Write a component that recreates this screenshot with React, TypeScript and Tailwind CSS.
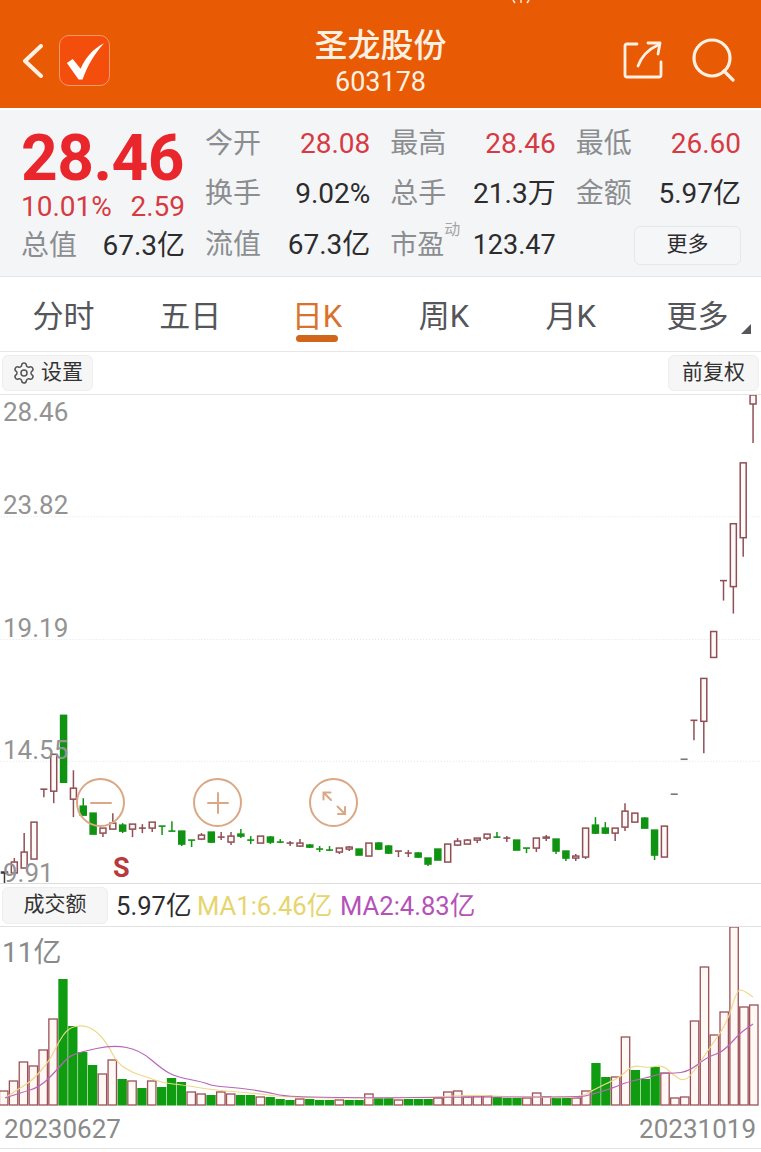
import { Settings } from 'lucide-react';

type Candle = [string, number, number, number, number];

// kind, high, body top, body bottom, low (page y)
const candles: Candle[] = [
  ['t', 872, 872, 873, 883], ['u', 858, 862, 873, 875], ['u', 833, 852, 868, 868], ['u', 822, 822, 859, 859],
  ['u', 789, 789, 789, 797], ['u', 754, 754, 791, 803], ['d', 715, 715, 782, 782], ['u', 770, 788, 799, 817],
  ['d', 798, 806, 815, 815], ['d', 813, 813, 834, 834], ['u', 828, 828, 833, 837], ['u', 813, 823, 829, 829],
  ['d', 823, 825, 831, 833], ['u', 824, 824, 829, 837], ['u', 824, 828, 828, 833], ['u', 822, 822, 828, 832],
  ['d', 826, 826, 826, 835], ['d', 821, 831, 831, 831], ['d', 831, 831, 844, 846], ['d', 840, 840, 840, 847],
  ['u', 833, 835, 839, 840], ['d', 832, 832, 842, 843], ['u', 832, 837, 837, 840], ['u', 832, 836, 842, 845],
  ['d', 829, 834, 836, 838], ['d', 836, 840, 840, 844], ['u', 836, 836, 843, 843], ['d', 836, 837, 842, 844],
  ['d', 839, 842, 842, 843], ['u', 841, 843, 843, 846], ['u', 839, 843, 846, 847], ['d', 844, 845, 847, 848],
  ['d', 846, 849, 849, 852], ['d', 846, 850, 850, 851], ['u', 848, 848, 852, 854], ['u', 846, 847, 849, 851],
  ['d', 849, 849, 855, 855], ['u', 843, 843, 856, 856], ['d', 842, 843, 849, 850], ['d', 845, 846, 853, 854],
  ['u', 851, 851, 851, 857], ['u', 850, 853, 853, 857], ['d', 852, 853, 857, 858], ['d', 858, 858, 864, 866],
  ['d', 849, 849, 860, 860], ['u', 844, 844, 862, 862], ['u', 838, 841, 845, 846], ['u', 839, 840, 844, 844],
  ['u', 838, 838, 840, 843], ['u', 834, 834, 838, 840], ['d', 832, 837, 837, 838], ['u', 836, 838, 838, 842],
  ['d', 840, 840, 850, 850], ['d', 848, 848, 848, 853], ['u', 838, 838, 848, 852], ['u', 835, 837, 838, 841],
  ['d', 839, 839, 851, 854], ['d', 851, 851, 858, 861], ['u', 854, 856, 858, 861], ['u', 828, 828, 857, 859],
  ['d', 817, 825, 833, 834], ['d', 822, 828, 833, 834], ['u', 828, 828, 833, 841], ['u', 803, 811, 827, 831],
  ['u', 813, 813, 822, 822], ['d', 817, 818, 828, 828], ['d', 830, 830, 855, 860], ['u', 826, 826, 857, 857],
  ['n', 794, 794, 794, 794], ['n', 759, 759, 759, 759], ['u', 720, 720, 720, 740], ['u', 678, 678, 721, 753],
  ['u', 631, 631, 657, 657], ['u', 580, 580, 580, 600], ['u', 523, 523, 586, 613], ['u', 462, 462, 537, 556],
  ['u', 394, 394, 403, 442],
];

// page y of each volume bar's top, green when true
const volumes: [number, boolean][] = [
  [1091, false], [1081, false], [1062, false], [1066, false], [1050, false], [1019, false], [979, true], [1026, true],
  [1052, true], [1065, true], [1074, false], [1060, false], [1079, true], [1081, false], [1088, true], [1081, false],
  [1087, true], [1078, true], [1082, true], [1092, false], [1094, false], [1095, true], [1092, false], [1094, false],
  [1095, true], [1095, true], [1097, false], [1097, true], [1099, true], [1100, true], [1099, false], [1099, true],
  [1100, true], [1100, true], [1100, false], [1100, true], [1100, true], [1094, false], [1098, true], [1098, true],
  [1100, false], [1099, true], [1099, true], [1099, true], [1098, false], [1092, false], [1091, false], [1097, false],
  [1096, false], [1096, false], [1097, true], [1098, true], [1098, true], [1098, false], [1093, false], [1097, false],
  [1097, true], [1098, true], [1098, false], [1091, false], [1063, true], [1077, true], [1077, false], [1037, false],
  [1070, true], [1079, true], [1067, true], [1073, false], [1098, false], [1097, false], [1021, false], [967, false],
  [1035, false], [1012, false], [927, false], [1007, false], [1005, false],
];

const ma1: [number, number][] = [
  [5, 1098], [20, 1088], [33, 1080], [50, 1060], [58, 1043], [68, 1028], [83, 1025], [95, 1030], [107, 1043],
  [117, 1063], [133, 1073], [147, 1077], [163, 1083], [183, 1085], [213, 1090], [253, 1093], [283, 1097], [333, 1098],
  [380, 1098], [433, 1097], [473, 1095], [493, 1096], [523, 1097], [580, 1098], [593, 1090], [610, 1082], [620, 1077],
  [633, 1065], [647, 1068], [663, 1065], [673, 1075], [685, 1082], [697, 1067], [713, 1043], [727, 1023], [737, 990],
  [743, 990], [753, 997],
];
const ma2: [number, number][] = [
  [5, 1098], [20, 1093], [40, 1087], [57, 1070], [68, 1057], [80, 1052], [113, 1045], [140, 1050], [163, 1070],
  [177, 1077], [203, 1082], [213, 1086], [240, 1088], [267, 1092], [283, 1096], [313, 1097], [380, 1098], [447, 1097],
  [580, 1097], [590, 1095], [613, 1088], [627, 1082], [650, 1077], [663, 1073], [687, 1073], [707, 1057], [723, 1052],
  [740, 1033], [753, 1024],
];

// rounds the corners off with quadratic segments through the midpoints
function smoothPath(points: [number, number][]) {
  let d = `M${points[0][0]} ${points[0][1]}`;
  for (let i = 1; i < points.length - 1; i++) {
    const [x, y] = points[i];
    const [nx, ny] = points[i + 1];
    d += ` Q${x} ${y} ${(x + nx) / 2} ${(y + ny) / 2}`;
  }
  const last = points[points.length - 1];
  return `${d} L${last[0]} ${last[1]}`;
}

function barX(i: number) {
  return 3.7 + i * 9.87;
}

function candleColor(kind: string) {
  if (kind === 'n') return '#777777';
  if (kind === 't') return '#3a3a3a';
  return kind === 'u' ? '#8f4f56' : '#109312';
}

function KChart() {
  return (
    <svg viewBox="0 394 761 489" className="block w-full h-full">
      {[516, 639, 761].map((y) => (
        <line key={y} x1="0" x2="761" y1={y} y2={y} stroke="#e4e4e4" strokeWidth="1" strokeDasharray="1 2" />
      ))}
      {candles.map(([kind, high, top, bot, low], i) => {
        const x = barX(i);
        const color = candleColor(kind);
        return (
          <g key={i}>
            {high !== low && <line x1={x} x2={x} y1={high} y2={low} stroke={color} strokeWidth="1.5" />}
            {top === bot ? (
              <line x1={x - 3.5} x2={x + 3.5} y1={top} y2={top} stroke={color} strokeWidth="1.6" />
            ) : (
              <rect
                x={x - 3}
                y={top}
                width="6"
                height={bot - top}
                fill={kind === 'd' ? color : '#fff9f7'}
                stroke={color}
                strokeWidth="1.5"
              />
            )}
          </g>
        );
      })}
    </svg>
  );
}

function VolumeChart() {
  return (
    <svg viewBox="0 927 761 179" className="block w-full h-full">
      {volumes.map(([top, green], i) => {
        const x = barX(i);
        return green ? (
          <rect key={i} x={x - 4.6} y={top} width="9.3" height={1105.5 - top} fill="#109c10" />
        ) : (
          <rect
            key={i}
            x={x - 4.2}
            y={top}
            width="8.4"
            height={1105 - top}
            fill="#fff8f5"
            stroke="#9a5158"
            strokeWidth="1.3"
          />
        );
      })}
      <path d={smoothPath(ma1)} fill="none" stroke="#ecd98a" strokeWidth="1.2" />
      <path d={smoothPath(ma2)} fill="none" stroke="#b866b8" strokeWidth="1.2" />
    </svg>
  );
}

function ZoomButton({ children }: { children: React.ReactNode }) {
  return (
    <div className="w-[49px] h-[49px] rounded-full border-2 border-[#dca784] flex items-center justify-center">
      <svg viewBox="0 0 28 28" className="w-7 h-7" fill="none" stroke="#dca784" strokeWidth="2" strokeLinecap="round">
        {children}
      </svg>
    </div>
  );
}

function Field({ label, value, red, sup }: { label: string; value: string; red?: boolean; sup?: boolean }) {
  return (
    <div className="flex items-center justify-between">
      <span className={`relative leading-none text-[#8b8d90] ${sup ? 'text-[27px]' : 'text-[28px]'}`}>
        {label}
        {sup && <span className="absolute left-[54px] -top-[10px] text-[16px] leading-none text-[#a5a6a8]">动</span>}
      </span>
      <span className={`leading-none ${sup ? 'text-[27px]' : 'text-[28px]'} ${red ? 'text-[#d63a42]' : 'text-[#2c2c2e]'}`}>
        {value}
      </span>
    </div>
  );
}

export default function App() {
  return (
    <div className="relative min-h-screen w-[761px] bg-white overflow-hidden [font-family:Roboto,'Noto_Sans_CJK_SC',sans-serif]">
      {/* Header */}
      <header className="relative h-[108px] bg-[#e85a04] grid grid-cols-[1fr_auto_1fr] items-center text-[#fdf1e3]">
        <svg viewBox="0 0 24 6" className="absolute left-[509px] top-0 w-6 h-[6px]" fill="none" stroke="#fde9d8" strokeWidth="1.5">
          <path d="M4 0 L6 3 M12 0 V3 M20 0 L18 3" />
        </svg>
        <div className="flex items-center pl-[22px] gap-[15px] pt-[13px]">
          <svg viewBox="0 0 22 34" className="w-[22px] h-[34px]" fill="none" stroke="#fdf1e3" strokeWidth="4" strokeLinecap="round" strokeLinejoin="round">
            <path d="M19 2 L3 17 L19 32" />
          </svg>
          <div className="w-[51px] h-[51px] rounded-[10px] bg-[#f44e0c] border border-[#f39a6c] flex items-center justify-center">
            <svg viewBox="0 0 50 50" className="w-[50px] h-[50px]" fill="#ffffff">
              <path d="M7 27 L13 23 L21 33 C26 22 33 13 45 7 C35 18 28 30 23 44 L19 44 Z" />
            </svg>
          </div>
        </div>
        <div className="flex flex-col items-center pt-[16px]">
          <div className="text-[33px] leading-[40px] font-medium">圣龙股份</div>
          <div className="text-[27px] leading-[32px]">603178</div>
        </div>
        <div className="flex items-center justify-end pr-[26px] gap-[28px] pt-[12px]">
          <svg viewBox="0 0 40 40" className="w-[40px] h-[40px]" fill="none" stroke="#fdf1e3" strokeWidth="2.8" strokeLinecap="round" strokeLinejoin="round">
            <path d="M14 4 H4 Q2 4 2 6 V35 Q2 37 4 37 H36 Q38 37 38 35 V22" />
            <path d="M15 26 C18 18 24 10 35 5" />
            <path d="M25 3 L37 3 L35 14" />
          </svg>
          <svg viewBox="0 0 44 44" className="w-[44px] h-[44px]" fill="none" stroke="#fdf1e3" strokeWidth="3.2" strokeLinecap="round">
            <circle cx="21" cy="20" r="18" />
            <path d="M33 33 L42 42" />
          </svg>
        </div>
      </header>

      {/* Quote */}
      <section className="mt-[2px] h-[167px] bg-[#f4f5f7] border-b border-[#e4e6ea] flex pl-[21px] pr-[20px] gap-[20px]">
        <div className="w-[164px] flex flex-col">
          <div className="text-[64px] leading-[54px] mt-[22px] font-bold text-[#e8262b] tracking-[-0.5px]">28.46</div>
          <div className="flex justify-between text-[28px] leading-none mt-[7px] text-[#d83a42]">
            <span>10.01%</span>
            <span>2.59</span>
          </div>
          <div className="flex justify-between items-center text-[28px] leading-none mt-[11px]">
            <span className="text-[#8b8d90]">总值</span>
            <span className="text-[#2c2c2e]">67.3亿</span>
          </div>
        </div>
        <div className="flex-1 grid grid-cols-3 gap-x-[20px] grid-rows-[50px_50px_52px] items-center pt-[9px] h-[161px]">
          <Field label="今开" value="28.08" red />
          <Field label="最高" value="28.46" red />
          <Field label="最低" value="26.60" red />
          <Field label="换手" value="9.02%" />
          <Field label="总手" value="21.3万" />
          <Field label="金额" value="5.97亿" />
          <Field label="流值" value="67.3亿" />
          <Field label="市盈" value="123.47" sup />
          <div className="flex justify-end">
            <button className="w-[107px] h-[39px] rounded-[6px] bg-[#f5f6f8] border border-[#e6e7ea] text-[21px] text-[#2c2c2e]">
              更多
            </button>
          </div>
        </div>
      </section>

      {/* Period tabs */}
      <nav className="grid grid-cols-6 h-[75px] pt-[6px] border-b border-[#e6e6e6] text-[31px] text-[#55565a]">
        <div className="flex items-center justify-center">分时</div>
        <div className="flex items-center justify-center">五日</div>
        <div className="relative flex items-center justify-center text-[#d9722c]">
          日K
          <span className="absolute left-[42px] top-[52px] w-[42px] h-[7px] rounded-full bg-[#d2651c]" />
        </div>
        <div className="flex items-center justify-center">周K</div>
        <div className="flex items-center justify-center">月K</div>
        <div className="relative flex items-center justify-center">
          更多
          <span className="absolute right-[10px] top-[41px] w-0 h-0 border-l-[10px] border-l-transparent border-b-[10px] border-b-[#55565a]" />
        </div>
      </nav>

      {/* Chart toolbar */}
      <div className="h-[43px] flex items-center justify-between px-[2px] border-b border-[#e4e4e4]">
        <button className="w-[91px] h-[36px] rounded-[6px] bg-[#f6f6f6] border border-[#eeeeee] flex items-center justify-center gap-[5px] text-[21px] text-[#333333]">
          <Settings size={24} strokeWidth={1.5} className="text-[#555555]" />
          设置
        </button>
        <button className="w-[91px] h-[36px] rounded-[6px] bg-[#f6f6f6] border border-[#eeeeee] text-[21px] text-[#333333]">
          前复权
        </button>
      </div>

      {/* Candlesticks */}
      <div className="relative h-[489px] border-b border-[#dcdcdc]">
        <KChart />
        <span className="absolute left-[3px] top-[2px] text-[26px] leading-[30px] text-[#939393]">28.46</span>
        <span className="absolute left-[3px] top-[95px] text-[26px] leading-[30px] text-[#939393]">23.82</span>
        <span className="absolute left-[3px] top-[218px] text-[26px] leading-[30px] text-[#939393]">19.19</span>
        <span className="absolute left-[3px] top-[340px] text-[26px] leading-[30px] text-[#939393]">14.55</span>
        <span className="absolute left-[3px] top-[463px] text-[26px] leading-[30px] text-[#939393]">9.91</span>
        <span className="absolute left-[113px] top-[456px] text-[27px] leading-[34px] font-bold text-[#b8393c]">S</span>
        <div className="absolute left-[76px] top-[383px]">
          <ZoomButton>
            <path d="M4 14 H24" />
          </ZoomButton>
        </div>
        <div className="absolute left-[193px] top-[383px]">
          <ZoomButton>
            <path d="M4 14 H24 M14 4 V24" />
          </ZoomButton>
        </div>
        <div className="absolute left-[309px] top-[383px]">
          <ZoomButton>
            <path d="M3.5 3.5 L11 11 M3.5 10.5 V3.5 H10.5 M25 25 L17.5 17.5 M25 18 V25 H18" />
          </ZoomButton>
        </div>
      </div>

      {/* Volume legend */}
      <div className="h-[43px] pt-[2px] flex items-center pl-[2px] border-b border-[#e2e2e2] text-[25.6px]">
        <button className="-mt-[2px] w-[106px] h-[37px] rounded-[6px] bg-[#f6f6f6] border border-[#eeeeee] text-[21px] text-[#333333] mr-[8px]">
          成交额
        </button>
        <span className="text-[#2c2c2e] w-[81px]">5.97亿</span>
        <span className="text-[#e6d46c] w-[143px]">MA1:6.46亿</span>
        <span className="text-[#b552b8]">MA2:4.83亿</span>
      </div>

      {/* Volume bars */}
      <div className="relative h-[179px]">
        <VolumeChart />
        <span className="absolute left-[2px] top-[10px] text-[28px] leading-[32px] text-[#8a8a8a]">11亿</span>
      </div>

      {/* Dates */}
      <div className="h-[43px] pt-[4px] flex items-center justify-between pl-[4px] pr-[5px] border-b border-[#e2e2e2] text-[26px] text-[#8a8a8a]">
        <span>20230627</span>
        <span>20231019</span>
      </div>
    </div>
  );
}
